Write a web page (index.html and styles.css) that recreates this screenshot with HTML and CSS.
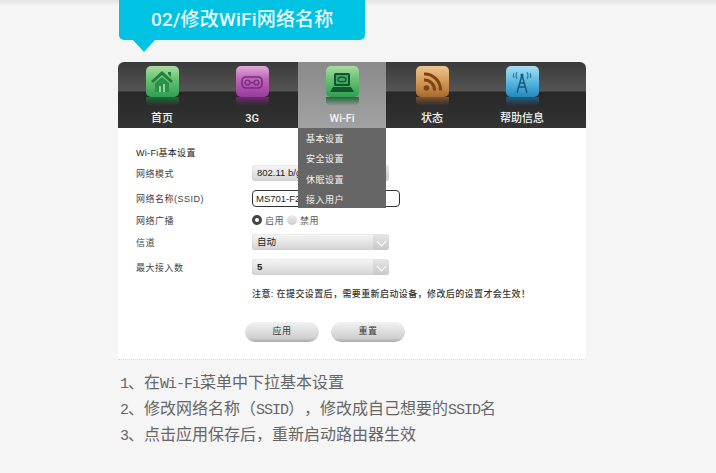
FILE: index.html
```html
<!DOCTYPE html>
<html lang="zh-CN">
<head>
  <meta charset="UTF-8">
  <title>修改WiFi网络名称</title>
  <link rel="stylesheet" href="styles.css">
</head>
<body>
  <div class="page">
    <div class="banner">02/修改WiFi网络名称</div>

    <div class="panel">
      <div class="nav">
        <div class="nav-item">
          <div class="icon icon-green">
            <svg viewBox="0 0 32 32" width="32" height="32">
              <path d="M16 5 L27 15 L25 17 L16 9 L7 17 L5 15 Z M22 6 h3 v5 l-3 -3 Z" fill="#1f7f3c"/>
              <path d="M9 17 L16 11 L23 17 V26 H9 Z" fill="#2c9048"/>
              <path d="M13 26 V20 h2 v6 Z M17 26 V18 h2 v8 Z" fill="#8fd49c"/>
            </svg>
          </div>
          <div class="reflect reflect-green"></div>
          <div class="nav-label">首页</div>
        </div>
        <div class="nav-item">
          <div class="icon icon-purple">
            <svg viewBox="0 0 32 32" width="32" height="32">
              <rect x="6" y="11" width="20" height="11" rx="4" fill="none" stroke="#7a2a80" stroke-width="1.6"/>
              <circle cx="11.5" cy="16.5" r="2.4" fill="none" stroke="#7a2a80" stroke-width="1.4"/>
              <circle cx="20.5" cy="16.5" r="2.4" fill="none" stroke="#7a2a80" stroke-width="1.4"/>
              <path d="M14 16.5 h4" stroke="#7a2a80" stroke-width="1.4"/>
            </svg>
          </div>
          <div class="reflect reflect-purple"></div>
          <div class="nav-label">3G</div>
        </div>
        <div class="nav-item nav-active">
          <div class="icon icon-green">
            <svg viewBox="0 0 32 32" width="32" height="32">
              <rect x="8" y="7" width="16" height="13" rx="1.5" fill="#14532b"/>
              <rect x="10" y="9" width="12" height="9" fill="#3fa763"/>
              <ellipse cx="16" cy="13.5" rx="4" ry="2.4" fill="none" stroke="#14532b" stroke-width="1.2"/>
              <path d="M7 21 H25 L28 26 H4 Z" fill="#14532b"/>
            </svg>
          </div>
          <div class="reflect reflect-green"></div>
          <div class="nav-label">Wi-Fi</div>
          <div class="menu">
            <div class="menu-item">基本设置</div>
            <div class="menu-item">安全设置</div>
            <div class="menu-item">休眠设置</div>
            <div class="menu-item">接入用户</div>
          </div>
        </div>
        <div class="nav-item">
          <div class="icon icon-orange">
            <svg viewBox="0 0 32 32" width="32" height="32">
              <circle cx="10.5" cy="22" r="2.8" fill="#7c4413"/>
              <path d="M8 14 A10 10 0 0 1 18.500 24.500" fill="none" stroke="#7c4413" stroke-width="3"/>
              <path d="M8 8 A16 16 0 0 1 24.500 24.500" fill="none" stroke="#7c4413" stroke-width="3"/>
            </svg>
          </div>
          <div class="reflect reflect-orange"></div>
          <div class="nav-label">状态</div>
        </div>
        <div class="nav-item">
          <div class="icon icon-blue">
            <svg viewBox="0 0 32 32" width="32" height="32">
              <path d="M16 9 L11 27 M16 9 L21 27 M12.500 21 H19.500 M13.500 17 H18.500" fill="none" stroke="#155a86" stroke-width="1.5"/>
              <circle cx="16" cy="9" r="1.6" fill="#155a86"/>
              <path d="M11 6 Q9 9.500 11 13 M21 6 Q23 9.500 21 13 M8 7 Q6.500 9.500 8 12 M24 7 Q25.500 9.500 24 12" fill="none" stroke="#2a7fb0" stroke-width="1.1"/>
            </svg>
          </div>
          <div class="reflect reflect-blue"></div>
          <div class="nav-label">帮助信息</div>
        </div>
      </div>

      <div class="form">
        <div class="form-title">Wi-Fi基本设置</div>
        <div class="row row-mode">
          <div class="label">网络模式</div>
          <div class="select">802.11 b/g/n<span class="arrow"></span></div>
        </div>
        <div class="row row-ssid">
          <div class="label">网络名称(SSID)</div>
          <div class="input">MS701-F2</div>
        </div>
        <div class="row row-radio">
          <div class="label">网络广播</div>
          <div class="radios">
            <span class="radio radio-on"></span><span>启用</span>
            <span class="radio"></span><span>禁用</span>
          </div>
        </div>
        <div class="row row-channel">
          <div class="label">信道</div>
          <div class="select">自动<span class="arrow"></span></div>
        </div>
        <div class="row row-max">
          <div class="label">最大接入数</div>
          <div class="select select-bold">5<span class="arrow"></span></div>
        </div>
        <div class="notice">注意: 在提交设置后，需要重新启动设备，修改后的设置才会生效！</div>
        <div class="buttons">
          <div class="btn">应用</div>
          <div class="btn">重置</div>
        </div>
      </div>
    </div>

    <div class="steps">
      <p><span class="latin">1</span>、在<span class="latin">Wi-Fi</span>菜单中下拉基本设置</p>
      <p><span class="latin">2</span>、修改网络名称（<span class="latin">SSID</span>），修改成自己想要的<span class="latin">SSID</span>名</p>
      <p><span class="latin">3</span>、点击应用保存后，重新启动路由器生效</p>
    </div>
  </div>
</body>
</html>
```

FILE: styles.css
```css
* {
  box-sizing: border-box;
}

html, body {
  height: 100%;
}

body {
  margin: 0;
  overflow: hidden;
  background: linear-gradient(#e4e4e4, #f5f5f5 6px);
  font-family: "Liberation Sans", "Noto Sans CJK SC", sans-serif;
}

.page {
  width: 468px;
  margin-left: 118px;
}

.banner {
  position: relative;
  width: 246px;
  height: 40px;
  margin-left: 1px;
  padding-left: 32px;
  background: #00c3e3;
  border-radius: 0 0 5px 5px;
  color: #eefbfd;
  font-family: Roboto, "Noto Sans CJK SC", sans-serif;
  font-size: 19px;
  font-weight: 500;
  letter-spacing: 0.2px;
  line-height: 39px;
}

.banner::after {
  content: "";
  position: absolute;
  left: 14px;
  top: 40px;
  border-left: 11px solid transparent;
  border-right: 11px solid transparent;
  border-top: 12px solid #00c3e3;
}

.panel {
  margin-top: 22px;
  height: 298px;
  background: #fff;
  border-radius: 6px 6px 0 0;
  border-bottom: 1px dotted #d8d8d8;
}

.nav {
  display: flex;
  height: 66px;
  background: linear-gradient(#3a3a3a, #555 29px, #282828 30px, #333 100%);
  border-radius: 6px 6px 0 0;
}

.nav-item {
  position: relative;
  width: 90px;
  padding: 4px 2px 0 0;
  display: flex;
  flex-direction: column;
  align-items: center;
}

.nav-active {
  width: 88px;
  margin-right: 2px;
  padding-right: 0;
  background: linear-gradient(#8a8a8a, #a2a2a2);
}

.icon {
  width: 33px;
  height: 31px;
  border-radius: 5px;
  display: flex;
  align-items: center;
  justify-content: center;
  flex: none;
}

.icon-green {
  background: linear-gradient(#a9dc9f, #6cc477 40%, #2f9e50);
}

.icon-purple {
  background: linear-gradient(#e3a9dc, #bf68b8 40%, #97399b);
}

.icon-orange {
  background: linear-gradient(#eec48e, #d59a5a 50%, #a66a2c);
}

.icon-blue {
  background: linear-gradient(#a5e0f2, #5bb9e0 50%, #2488be);
}

.reflect {
  width: 33px;
  height: 9px;
  flex: none;
  border-radius: 0 0 5px 5px;
}

.reflect-green {
  background: linear-gradient(#1f6b39, rgba(31, 107, 57, 0));
}

.reflect-purple {
  background: linear-gradient(#6a2c6e, rgba(106, 44, 110, 0));
}

.reflect-orange {
  background: linear-gradient(#7a5531, rgba(122, 85, 49, 0));
}

.reflect-blue {
  background: linear-gradient(#1d5f85, rgba(29, 95, 133, 0));
}

.nav-label {
  margin-top: 5px;
  color: #f4f4f4;
  font-family: Roboto, "Noto Sans CJK SC", sans-serif;
  font-size: 11px;
  font-weight: 500;
  line-height: 16px;
}

.menu {
  position: absolute;
  left: 0;
  top: 66px;
  width: 88px;
  height: 80px;
  padding-top: 1px;
  background: #666;
  z-index: 2;
}

.menu-item {
  height: 20.3px;
  padding-left: 8px;
  color: #f4f4f4;
  font-size: 9px;
  letter-spacing: 0.5px;
  line-height: 20px;
}

.form {
  padding: 18px 0 0 18px;
  color: #444;
  font-size: 9px;
}

.form-title {
  color: #222;
  height: 15px;
  line-height: 15px;
  letter-spacing: 0.3px;
}

.row {
  display: flex;
  align-items: center;
}

.row-mode {
  height: 22px;
  margin-top: 1px;
}

.row-ssid {
  height: 19px;
  margin-top: 5px;
}

.row-radio {
  height: 16px;
  margin-top: 4px;
}

.row-channel {
  height: 18px;
  margin-top: 5px;
}

.row-max {
  height: 18px;
  margin-top: 7px;
}

.label {
  width: 116px;
  flex: none;
  letter-spacing: 0.5px;
}

.select {
  position: relative;
  width: 137px;
  height: 16px;
  padding-left: 5px;
  background: linear-gradient(#f6f6f6, #d4d4d4);
  border-radius: 4px;
  box-shadow: inset 0 0 1px #999;
  color: #222;
  font-size: 9.5px;
  line-height: 16px;
}

.select-bold {
  font-weight: 700;
}

.arrow {
  position: absolute;
  right: 0;
  top: 0;
  width: 16px;
  height: 16px;
  background: linear-gradient(#e6e6e6, #c8c8c8);
  border-radius: 0 4px 4px 0;
}

.arrow::after {
  content: "";
  position: absolute;
  left: 5px;
  top: 4px;
  width: 6px;
  height: 6px;
  border-right: 1px solid #fff;
  border-bottom: 1px solid #fff;
  transform: rotate(45deg);
}

.input {
  width: 148px;
  height: 17px;
  padding-left: 3px;
  background: #fff;
  border: 1px solid #333;
  border-radius: 4px;
  color: #222;
  font-size: 9.5px;
  line-height: 15px;
}

.radios {
  display: flex;
  align-items: center;
  gap: 3px;
  color: #555;
  letter-spacing: 0.5px;
}

.radio {
  width: 10px;
  height: 10px;
  border-radius: 50%;
  background: linear-gradient(#eee, #ccc);
}

.radio-on {
  background: #fff;
  border: 3px solid #444;
}

.notice {
  margin: 11px 0 0 116px;
  color: #333;
  font-weight: 500;
  line-height: 14px;
  letter-spacing: 0.4px;
  white-space: nowrap;
}

.buttons {
  display: flex;
  gap: 12px;
  margin: 21px 0 0 109px;
}

.btn {
  width: 74px;
  height: 20px;
  background: linear-gradient(#f2f2f2, #d0d0d0 80%, #a8a8a8);
  border-radius: 10px;
  color: #333;
  text-align: center;
  line-height: 19px;
  letter-spacing: 0.5px;
}

.steps {
  margin: 8px 0 0 2px;
  color: #666;
  font-family: "Noto Sans CJK SC", sans-serif;
  font-size: 16px;
  text-spacing-trim: space-all;
}

.steps p {
  margin: 0;
  height: 26px;
  line-height: 26px;
  white-space: nowrap;
}

.latin {
  font-family: "Liberation Mono", monospace;
  font-size: 15px;
  letter-spacing: -1px;
}
```
